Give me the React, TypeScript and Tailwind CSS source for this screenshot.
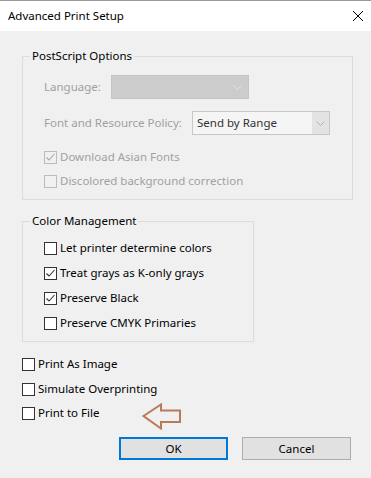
import React from "react";

const font = { fontFamily: '"Noto Sans", "Open Sans", sans-serif' };

function Box({ checked, disabled }: { checked?: boolean; disabled?: boolean }) {
  return (
    <span
      className={`flex w-[13px] h-[13px] shrink-0 items-center justify-center border ${
        disabled ? "border-[#bcbcbc] bg-[#f0f0f0]" : "border-[#333333] bg-white"
      }`}
    >
      {checked && (
        <svg width="11" height="11" viewBox="0 0 11 11">
          <polyline
            points="1.5,5.5 4,8 9.5,2"
            fill="none"
            stroke={disabled ? "#a8a8a8" : "#333333"}
            strokeWidth="1.1"
          />
        </svg>
      )}
    </span>
  );
}

function Check({
  label,
  checked,
  disabled,
  className = "",
}: {
  label: string;
  checked?: boolean;
  disabled?: boolean;
  className?: string;
}) {
  return (
    <div className={`flex h-[16px] items-center gap-[3px] ${className}`}>
      <Box checked={checked} disabled={disabled} />
      <span className={`text-[11.5px] leading-[16px] ${disabled ? "text-[#a0a0a0]" : "text-black"}`}>{label}</span>
    </div>
  );
}

function Chevron({ color }: { color: string }) {
  return (
    <svg width="9" height="5" viewBox="0 0 9 5">
      <polyline points="0.5,0.5 4.5,4.5 8.5,0.5" fill="none" stroke={color} strokeWidth="1" />
    </svg>
  );
}

export default function App() {
  return (
    <div className="w-[371px] h-[478px] bg-[#f0f0f0] border-t border-[#9a9a9a] overflow-hidden" style={font}>
      {/* title bar */}
      <div className="flex h-[30px] items-center justify-between bg-white pl-[8px] pr-[8px]">
        <span className="text-[11.5px] text-black leading-[16px]">Advanced Print Setup</span>
        <svg width="10" height="10" viewBox="0 0 10 10">
          <line x1="0" y1="0" x2="10" y2="10" stroke="#000" strokeWidth="1" />
          <line x1="10" y1="0" x2="0" y2="10" stroke="#000" strokeWidth="1" />
        </svg>
      </div>

      <div className="pl-[22px]">
        {/* PostScript Options */}
        <fieldset className="mt-[17px] w-[331px] border border-[#dcdcdc]">
          <legend className="ml-[7px] px-[2px] text-[11.5px] leading-[16px] text-black">PostScript Options</legend>
          <div className="flex flex-col pl-[21px] pt-[11px] pb-[10px]">
            <div className="flex h-[24px] items-center">
              <span className="w-[67px] text-[11.5px] text-[#a0a0a0]">Language:</span>
              <div className="flex h-[24px] w-[138px] items-center justify-end border border-[#c4c4c4] bg-[#cccccc] pr-[6px]">
                <Chevron color="#e2e2e2" />
              </div>
            </div>
            <div className="mt-[12px] flex h-[24px] items-center">
              <span className="w-[148px] text-[11.5px] text-[#a0a0a0]">Font and Resource Policy:</span>
              <div className="flex h-[24px] w-[138px] items-stretch border border-[#c8c8c8] bg-[#f5f5f5]">
                <span className="flex flex-1 items-center pl-[4px] text-[11.5px] text-[#333333]">Send by Range</span>
                <span className="flex w-[17px] items-center justify-center bg-[#e3e3e3]">
                  <Chevron color="#b0b0b0" />
                </span>
              </div>
            </div>
            <Check className="mt-[14px]" label="Download Asian Fonts" checked disabled />
            <Check className="mt-[8px]" label="Discolored background correction" disabled />
          </div>
        </fieldset>

        {/* Color Management */}
        <fieldset className="mt-[13px] w-[232px] border border-[#dcdcdc]">
          <legend className="ml-[7px] px-[2px] text-[11.5px] leading-[16px] text-black">Color Management</legend>
          <div className="flex flex-col gap-[9px] pl-[21px] pt-[11px] pb-[10px]">
            <Check label="Let printer determine colors" />
            <Check label="Treat grays as K-only grays" checked />
            <Check label="Preserve Black" checked />
            <Check label="Preserve CMYK Primaries" />
          </div>
        </fieldset>

        <Check className="mt-[14px]" label="Print As Image" />
        <Check className="mt-[9px]" label="Simulate Overprinting" />
        <div className="relative mt-[8px]">
          <Check label="Print to File" />
          <svg
            className="absolute left-[120px] top-[-2px]"
            width="40"
            height="27"
            viewBox="0 0 40 27"
          >
            <polygon
              points="1.5,13 19,1.5 19,7.5 38,7.5 38,19 19,19 19,25.5"
              fill="none"
              stroke="#b97a57"
              strokeWidth="2"
              strokeLinejoin="miter"
            />
          </svg>
        </div>
      </div>

      <div className="mt-[16px] flex justify-end gap-[14px] pr-[20px]">
        <button className="h-[23px] w-[109px] border-2 border-[#0078d7] bg-[#e1e1e1] text-[11.5px] text-black">OK</button>
        <button className="h-[23px] w-[109px] border border-[#adadad] bg-[#e1e1e1] text-[11.5px] text-black">Cancel</button>
      </div>
    </div>
  );
}
